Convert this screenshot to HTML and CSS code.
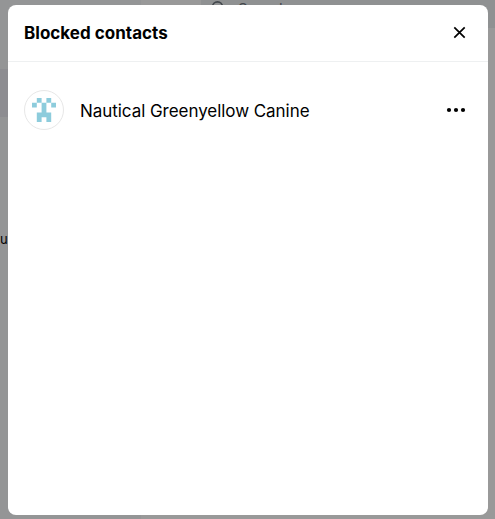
FILE: index.html
```html
<!DOCTYPE html>
<html lang="en">
<head>
<meta charset="utf-8">
<title>Blocked contacts</title>
<link rel="stylesheet" href="styles.css">
</head>
<body>
<div class="app">
  <aside class="sidebar">
    <div class="sidebar-item"></div>
    <div class="sidebar-text">u</div>
  </aside>
  <main class="main">
    <div class="search">
      <svg class="search-icon" width="20" height="20" viewBox="0 0 20 20" fill="none" stroke="currentColor" stroke-width="1.8"><circle cx="8.5" cy="6.8" r="5"/><path d="M12 10.5l4 4"/></svg>
      <span class="search-label">Search</span>
    </div>
  </main>
</div>
<div class="modal" role="dialog" aria-labelledby="title">
  <header class="modal-header">
    <h1 class="modal-title" id="title">Blocked contacts</h1>
    <button class="icon-button" aria-label="Close">
      <svg width="24" height="24" viewBox="0 0 24 24" fill="none" stroke="currentColor" stroke-width="1.7"><path d="M6.3 6.3l10.4 10.4M16.7 6.3l-10.4 10.4"/></svg>
    </button>
  </header>
  <ul class="contacts">
    <li class="contact">
      <div class="avatar">
        <svg width="24" height="24" viewBox="0 0 5 5" fill="#8dccdc"><path d="M1 0h1v1H1zM3 0h1v1H3zM0 1h1v1H0zM2 1h1v2h1v2H3V4H2v1H1V3h1zM4 1h1v1H4z"/></svg>
      </div>
      <span class="contact-name">Nautical Greenyellow Canine</span>
      <button class="icon-button" aria-label="More">
        <svg width="24" height="24" viewBox="0 0 24 24" fill="currentColor"><circle cx="1" cy="12" r="2.1"/><circle cx="8" cy="12" r="2.1"/><circle cx="15" cy="12" r="2.1"/></svg>
      </button>
    </li>
  </ul>
</div>
</body>
</html>
```
FILE: styles.css
```css
* {
  box-sizing: border-box;
}

body {
  margin: 0;
  height: 519px;
  overflow: hidden;
  font-family: Inter, "Liberation Sans", sans-serif;
  color: #000;
}

svg {
  overflow: visible;
}

.app {
  display: flex;
  height: 519px;
  overflow: hidden;
}

.sidebar {
  flex: 0 0 141px;
  padding-top: 69px;
  background: #949596;
}

.sidebar-item {
  height: 48px;
  background: #8d8d91;
}

.sidebar-text {
  margin-top: 112px;
  font-size: 13px;
  line-height: 20px;
}

.main {
  flex: 1;
  padding-left: 60px;
  background: #999;
}

.search {
  display: flex;
  align-items: center;
  gap: 9px;
  height: 36px;
  margin-top: -8px;
  padding-left: 8px;
  background: #8f9192;
  color: #43484d;
  font-size: 15px;
}

.search-label {
  margin-top: -3px;
}

/* The dialog floats over the page. */
.modal {
  position: absolute;
  top: 5px;
  left: 8px;
  width: 480px;
  height: 510px;
  border-radius: 8px;
  background: #fff;
}

.modal-header {
  display: flex;
  align-items: center;
  justify-content: space-between;
  height: 57px;
  padding: 0 16px;
  border-bottom: 1px solid #eef0f1;
}

.modal-title {
  margin: 0;
  font-size: 17px;
  line-height: 24px;
  font-weight: 700;
  letter-spacing: 0.02px;
}

.icon-button {
  display: flex;
  padding: 0;
  border: 0;
  background: none;
  color: #000;
}

.contacts {
  margin: 0;
  padding: 16px 0;
  list-style: none;
}

.contact {
  display: flex;
  align-items: center;
  height: 64px;
  padding: 0 16px;
}

.avatar {
  display: flex;
  align-items: center;
  justify-content: center;
  width: 40px;
  height: 40px;
  margin-right: 16px;
  border: 1px solid #e7e7e7;
  border-radius: 50%;
}

.contact-name {
  flex: 1;
  padding-top: 2px;
  font-size: 17px;
  line-height: 24px;
  letter-spacing: -0.05px;
}
```
